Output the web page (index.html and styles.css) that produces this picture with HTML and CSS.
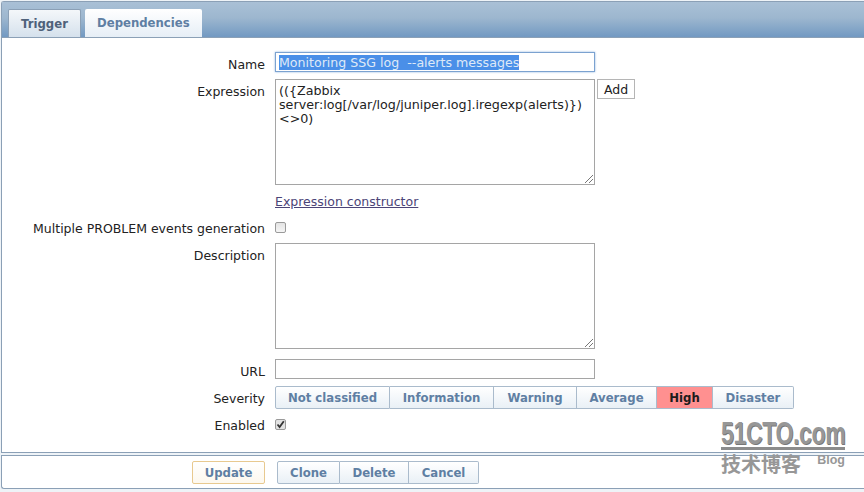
FILE: index.html
```html
<!DOCTYPE html>
<html lang="en">
<head>
  <meta charset="UTF-8">
  <meta name="viewport" content="width=device-width, initial-scale=1.0">
  <link rel="stylesheet" href="styles.css">
  <title>Trigger</title>
</head>
<body>
  <div class="panel">
    <div class="tabs">
      <div class="tab tab-active">Trigger</div>
      <div class="tab">Dependencies</div>
    </div>
    <div class="form">
      <div class="row row-name">
        <div class="label">Name</div>
        <div class="field"><div class="input input-focus"><span class="selected">Monitoring SSG log&nbsp; --alerts messages</span></div></div>
      </div>
      <div class="row row-expression">
        <div class="label">Expression</div>
        <div class="field">
          <div class="textarea">(({Zabbix<br>server:log[/var/log/juniper.log].iregexp(alerts)})<br>&lt;&gt;0)
            <svg class="grip" width="10" height="10" viewBox="0 0 10 10"><path d="M1 9 9 1M5 9 9 5" stroke="#777" fill="none"/></svg>
          </div>
          <div class="add">Add</div>
        </div>
      </div>
      <div class="row row-link">
        <div class="label"></div>
        <div class="field"><a class="link" href="#">Expression constructor</a></div>
      </div>
      <div class="row row-multiple">
        <div class="label">Multiple PROBLEM events generation</div>
        <div class="field"><span class="check"></span></div>
      </div>
      <div class="row row-description">
        <div class="label">Description</div>
        <div class="field">
          <div class="textarea">
            <svg class="grip" width="10" height="10" viewBox="0 0 10 10"><path d="M1 9 9 1M5 9 9 5" stroke="#777" fill="none"/></svg>
          </div>
        </div>
      </div>
      <div class="row row-url">
        <div class="label">URL</div>
        <div class="field"><div class="input"></div></div>
      </div>
      <div class="row row-severity">
        <div class="label">Severity</div>
        <div class="field">
          <div class="btn-group">
            <div class="btn sev-1">Not classified</div>
            <div class="btn sev-2">Information</div>
            <div class="btn sev-3">Warning</div>
            <div class="btn sev-4">Average</div>
            <div class="btn sev-5 btn-high">High</div>
            <div class="btn sev-6">Disaster</div>
          </div>
        </div>
      </div>
      <div class="row row-enabled">
        <div class="label">Enabled</div>
        <div class="field"><span class="check check-on"><svg width="9" height="9" viewBox="0 0 9 9"><path d="M1.5 4.5 3.6 7 7.8 1.2" stroke="#333" stroke-width="1.8" fill="none"/></svg></span></div>
      </div>
    </div>
  </div>
  <div class="footer">
    <div class="btn btn-update">Update</div>
    <div class="btn-group">
      <div class="btn act-clone">Clone</div>
      <div class="btn act-delete">Delete</div>
      <div class="btn act-cancel">Cancel</div>
    </div>
  </div>
  <div class="watermark">
    <div class="wm-top"><span class="wm-logo">51CTO.com</span></div>
    <div class="wm-bottom"><span>技术博客</span><span class="wm-blog">Blog</span></div>
  </div>
</body>
</html>
```

FILE: styles.css
```css
html, body {
  margin: 0;
  height: 492px;
  overflow: hidden;
}

body {
  position: relative;
  font-family: "DejaVu Sans", Verdana, sans-serif;
  font-size: 12px;
  color: #222;
  background: #eef3f7;
}

.panel {
  margin: 1px 0 0 1px;
  height: 452px;
  box-sizing: border-box;
  border: 1px solid #8ba0b6;
  border-right: 0;
  border-radius: 3px 0 0 0;
  background: #fff;
}

.tabs {
  display: flex;
  height: 36px;
  box-sizing: border-box;
  padding: 7px 0 0 6px;
  gap: 4px;
  background: linear-gradient(#a9c0d6, #9db7cf 45%, #7299c2);
  border-bottom: 1px solid #8ba0b6;
}

.tab {
  padding: 0 12px;
  line-height: 29px;
  font-weight: bold;
  font-size: 11.7px;
  color: #5f7fa3;
  background: linear-gradient(#fff, #e6eef6);
  border-radius: 2px 2px 0 0;
}

.tab-active {
  width: 73px;
  box-sizing: border-box;
  padding: 0;
  line-height: 28px;
  text-align: center;
  color: #4e617a;
  background: linear-gradient(#f4f7fa, #d5e1ec);
  border: 1px solid #8ba0b6;
  border-bottom: 0;
}

.form {
  background: #fff;
}

.row {
  display: flex;
}

.label {
  width: 273px;
  flex: none;
  text-align: right;
  font-size: 12.5px;
  padding-right: 10px;
  box-sizing: border-box;
}

.field {
  display: flex;
  flex: 1;
  gap: 2px;
}

.row-name { margin-top: 14px; height: 20px; }
.row-name .label { padding-top: 5px; }
.row-expression { margin-top: 7px; height: 106px; }
.row-expression .label { padding-top: 5px; }
.row-link { margin-top: 8px; height: 17px; }
.row-multiple { margin-top: 9px; height: 17px; }
.row-multiple .label { padding-top: 2px; }
.row-multiple .field { align-items: center; }
.row-description { margin-top: 7px; height: 106px; }
.row-description .label { padding-top: 5px; }
.row-url { margin-top: 10px; height: 20px; }
.row-url .label { padding-top: 5px; }
.row-severity { margin-top: 7px; height: 23px; }
.row-severity .label { line-height: 25px; }
.row-enabled { margin-top: 7px; height: 17px; }
.row-enabled .label { padding-top: 2px; }
.row-enabled .field { align-items: center; }

.input {
  width: 320px;
  height: 20px;
  box-sizing: border-box;
  border: 1px solid #a5a5a5;
  padding: 1px 3px;
  line-height: 17px;
  font-size: 12.6px;
  background: #fff;
}

.input-focus {
  border-color: #7ba2d0;
  box-shadow: 0 0 2px #8fb4e0;
}

.selected {
  background: #4a8fe8;
  color: #dfe9f7;
}

.textarea {
  position: relative;
  width: 320px;
  height: 106px;
  box-sizing: border-box;
  border: 1px solid #a5a5a5;
  padding: 4px 3px;
  font-size: 12.7px;
  line-height: 14px;
  background: #fff;
}

.grip {
  position: absolute;
  right: 0;
  bottom: 0;
}

.add {
  height: 20px;
  width: 38px;
  box-sizing: border-box;
  border: 1px solid #b5b5b5;
  text-align: center;
  line-height: 19px;
  font-size: 12.5px;
}

.link {
  font-size: 12.5px;
  color: #4b4477;
  line-height: 17px;
}

.check {
  display: inline-flex;
  align-items: center;
  justify-content: center;
  width: 11px;
  height: 11px;
  box-sizing: border-box;
  border: 1px solid #9a9a9a;
  border-radius: 2px;
  background: linear-gradient(#e4e4e4, #f5f5f5);
}

.check-on {
  background: #e2e2e2;
}

.btn-group {
  display: flex;
}

.btn {
  height: 23px;
  box-sizing: border-box;
  border: 1px solid #aabbcc;
  border-left-width: 0;
  text-align: center;
  line-height: 23px;
  font-weight: bold;
  font-size: 11.7px;
  color: #5f7fa3;
  background: linear-gradient(#fff, #e9f0f6);
}

.btn-group .btn:first-child {
  border-left-width: 1px;
  border-radius: 2px 0 0 2px;
}

.btn-group .btn:last-child {
  border-radius: 0 2px 2px 0;
}

.sev-1 { width: 115px; }
.sev-2 { width: 104px; }
.sev-3 { width: 83px; }
.sev-4 { width: 80px; }
.sev-5 { width: 56px; }
.sev-6 { width: 81px; }

.btn-high {
  color: #1c1c1c;
  background: #ff9090;
}

.footer {
  display: flex;
  gap: 12px;
  margin: 2px 0 0 1px;
  height: 34px;
  box-sizing: border-box;
  border: 1px solid #8ba0b6;
  border-right: 0;
  border-radius: 0 0 0 3px;
  padding: 5px 0 0 190px;
  background: #fff;
}

.btn-update {
  width: 73px;
  border: 1px solid #e8c98f;
  border-radius: 2px;
  background: linear-gradient(#fff, #fdf8ee);
}

.act-clone { width: 63px; }
.act-delete { width: 69px; }
.act-cancel { width: 70px; }

/* 51CTO stamp sits over the page */
.watermark {
  position: absolute;
  left: 721px;
  top: 416px;
  width: 124px;
  color: #979797;
}

.wm-top {
  height: 31px;
  border-bottom: 3px solid #8c8c8c;
  white-space: nowrap;
}

.wm-logo {
  display: inline-block;
  font-family: "Liberation Sans", Arial, sans-serif;
  font-size: 32px;
  font-weight: bold;
  line-height: 34px;
  letter-spacing: -0.5px;
  text-shadow: 1px 1px #777;
  transform: scaleX(0.72);
  transform-origin: left;
}

.wm-bottom {
  display: flex;
  justify-content: space-between;
  margin-top: 3px;
  font-family: "Noto Sans CJK SC", sans-serif;
  font-size: 20px;
  font-weight: bold;
  line-height: 22px;
}

.wm-blog {
  font-family: "Liberation Sans", Arial, sans-serif;
  font-size: 12.5px;
  line-height: 14px;
}
```
